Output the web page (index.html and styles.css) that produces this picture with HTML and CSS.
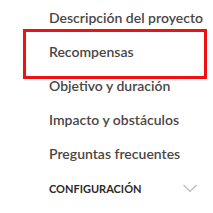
FILE: index.html
```html
<!DOCTYPE html>
<html lang="es">
<head>
    <title>Proyecto</title>
    <link rel="stylesheet" href="styles.css">
</head>
<body>
    <div class="menu">
        <a class="item">Descripción del proyecto</a>
        <a class="item current">Recompensas</a>
        <a class="item">Objetivo y duración</a>
        <a class="item">Impacto y obstáculos</a>
        <a class="item">Preguntas frecuentes</a>
        <div class="section">
            <span>CONFIGURACIÓN</span>
            <svg class="chev" width="16" height="9" viewBox="0 0 16 9">
                <path d="M1.5 1 L8 7.5 L14.5 1" fill="none" stroke="#bdb8b4" stroke-width="1.2"/>
            </svg>
        </div>
    </div>
    <div class="mark"></div>
</body>
</html>
```

FILE: styles.css
```css
body{
    margin: 0;
    background: #fff;
    font-family: Lato, "Open Sans", sans-serif;
}
.menu{
    display: flex;
    flex-direction: column;
    padding: 1px 0 0 49px;
}
.item{
    height: 34px;
    line-height: 34px;
    font-size: 14px;
    font-weight: 600;
    color: #4a4644;
    white-space: nowrap;
}
.section{
    display: flex;
    align-items: center;
    justify-content: space-between;
    height: 34px;
    padding-right: 15px;
    font-size: 11px;
    font-weight: 700;
    color: #2e2a28;
}
.mark{
    position: absolute;
    left: 23px;
    top: 29px;
    width: 178px;
    height: 44px;
    border: 3px solid #f01010;
}
```
